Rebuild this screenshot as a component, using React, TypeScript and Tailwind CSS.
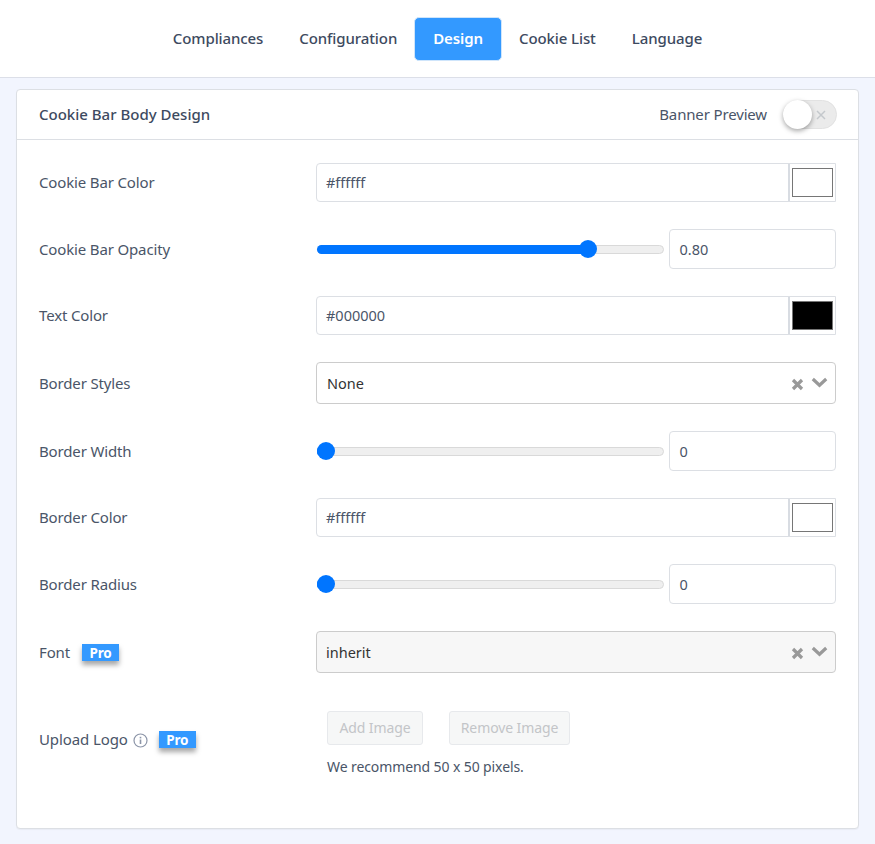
import React from "react";

const font = { fontFamily: '"Noto Sans", sans-serif' };

function Tab({ label, active }: { label: string; active?: boolean }) {
  return (
    <div className={active ? "h-[44px] -mx-[1px] px-[18px] flex items-center rounded-[5px] bg-[#3399ff] text-white text-[15px] font-semibold border border-[#cfe5fb] tracking-[-0.1px]" : "h-[44px] px-[18px] flex items-center text-[15px] font-medium text-[#3d4a60] tracking-[-0.1px]"}>
      {label}
    </div>
  );
}

function Row({ label, children }: { label: React.ReactNode; children: React.ReactNode }) {
  return (
    <div className="grid grid-cols-[277px_520px] items-center">
      <div className="flex items-center text-[15px] text-[#4a5568] tracking-[-0.15px]">{label}</div>
      <div>{children}</div>
    </div>
  );
}

function ColorRow({ value, color }: { value: string; color: string }) {
  return (
    <div className="flex h-[39px] border border-[#dcdfe4] rounded-l-[4px]">
      <div className="flex-1 flex items-center px-[9px] pt-[1px] text-[14.5px] text-[#4a5568]">{value}</div>
      <div className="w-[47px] border-l-2 border-[#d8dce2] flex items-center justify-center">
        <div className="w-[41px] h-[29px] border border-[#767676]" style={{ background: color }} />
      </div>
    </div>
  );
}

function SliderRow({ value, pct }: { value: string; pct: number }) {
  return (
    <div className="flex items-center h-[40px]">
      <div className="relative ml-[1px] w-[347px] h-[9px] rounded-full bg-[#efefef] border border-[#d9d9d9]">
        <div className="absolute -left-px -top-px h-[9px] rounded-full bg-[#0075ff]" style={{ width: `${pct}%` }} />
        <div className="absolute top-[-5.5px] w-[18px] h-[18px] rounded-full bg-[#0075ff]" style={{ left: `calc(${pct}% - 9px)` }} />
      </div>
      <div className="ml-[5px] w-[167px] h-[40px] flex items-center px-[9.5px] pt-[1px] border border-[#dcdfe4] rounded-[4px] text-[14.5px] text-[#4a5568]">{value}</div>
    </div>
  );
}

function SelectIcons() {
  return (
    <div className="flex items-center gap-[7px] pr-[7px] pl-2">
      <svg width="13" height="13" viewBox="0 0 13 13" className="mt-[2px]">
        <path d="M2 2 L11 11 M11 2 L2 11" stroke="#999999" strokeWidth="3.2" />
      </svg>
      <svg width="17" height="11" viewBox="0 0 17 11" className="-mt-[1px]">
        <path d="M1.8 2 L8.5 8.2 L15.2 2" stroke="#999999" strokeWidth="3.2" fill="none" />
      </svg>
    </div>
  );
}

function Pro() {
  return (
    <span className="inline-flex items-center justify-center w-[37px] h-[17px] bg-[#3399ff] text-white text-[13.5px] font-bold shadow-[0_4px_5px_rgba(0,0,0,0.35)] leading-none tracking-[-0.2px] pt-[2px]">
      Pro
    </span>
  );
}

export default function App() {
  return (
    <div className="w-[875px] h-[844px] overflow-hidden bg-[#f2f5fe]" style={font}>
      <div className="h-[78px] bg-white border-b border-[#dcdfe8] flex items-center justify-center">
        <div className="flex items-center">
          <Tab label="Compliances" />
          <Tab label="Configuration" />
          <Tab label="Design" active />
          <Tab label="Cookie List" />
          <Tab label="Language" />
        </div>
      </div>
      <div className="mx-[16px] mt-[11px] w-[843px] h-[740px] bg-white border border-[#dcdfe4] rounded-[4px] shadow-[0_1px_1px_rgba(0,0,0,0.04)]">
        <div className="h-[50px] border-b border-[#dcdfe4] flex items-center justify-between pl-[22px] pr-[21px]">
          <div className="text-[15px] font-medium text-[#3d4a60]">Cookie Bar Body Design</div>
          <div className="flex items-center">
            <span className="text-[15px] text-[#4a5568] tracking-[-0.15px] mr-[16px]">Banner Preview</span>
            <div className="relative w-[54px] h-[29px] rounded-full bg-[#ebebeb] border border-[#e2e2e2]">
              <div className="absolute left-[-1px] top-[-1px] w-[29px] h-[29px] rounded-full bg-white shadow-[0_2px_5px_rgba(0,0,0,0.35)]" />
              <svg width="10" height="10" viewBox="0 0 10 10" className="absolute right-[10px] top-[9px]">
                <path d="M1 1 L9 9 M9 1 L1 9" stroke="#c4c8cc" strokeWidth="1.5" />
              </svg>
            </div>
          </div>
        </div>
        <div className="pl-[22px] pt-[23px] flex flex-col gap-[27px]">
          <Row label="Cookie Bar Color"><ColorRow value="#ffffff" color="#ffffff" /></Row>
          <Row label="Cookie Bar Opacity"><SliderRow value="0.80" pct={78.3} /></Row>
          <Row label="Text Color"><ColorRow value="#000000" color="#000000" /></Row>
          <Row label="Border Styles">
            <div className="h-[42px] flex items-center justify-between border border-[#cccccc] rounded-[4px] pl-[10px]">
              <span className="text-[14.5px] text-[#333333] pt-[1px]">None</span>
              <SelectIcons />
            </div>
          </Row>
          <Row label="Border Width"><SliderRow value="0" pct={2.4} /></Row>
          <Row label="Border Color"><ColorRow value="#ffffff" color="#ffffff" /></Row>
          <Row label="Border Radius"><SliderRow value="0" pct={2.4} /></Row>
          <Row label={<><span>Font</span><span className="ml-[12px] mt-[1px] inline-flex"><Pro /></span></>}>
            <div className="h-[42px] flex items-center justify-between border border-[#cccccc] rounded-[4px] pl-[9px] bg-[#f7f7f7]">
              <span className="text-[14.5px] text-[#333333] pt-[1px]">inherit</span>
              <SelectIcons />
            </div>
          </Row>
          <div className="grid grid-cols-[277px_520px] items-start pt-[11px]">
            <div className="flex items-center text-[15px] text-[#4a5568] tracking-[-0.1px] pt-[17px]">
              <span>Upload Logo</span>
              <svg width="15" height="15" viewBox="0 0 15 15" className="ml-[5px] mt-[2px]">
                <circle cx="7.5" cy="7.5" r="6.5" fill="none" stroke="#8c95a8" strokeWidth="1.2" />
                <rect x="6.7" y="6.5" width="1.6" height="4.5" fill="#8c95a8" />
                <rect x="6.7" y="3.8" width="1.6" height="1.6" fill="#8c95a8" />
              </svg>
              <span className="ml-[11px] mt-[1px] inline-flex"><Pro /></span>
            </div>
            <div className="pl-[11px]">
              <div className="flex gap-[26px]">
                <div className="h-[34px] w-[96px] pb-[1px] flex items-center justify-center border border-[#e7e9ec] rounded-[3px] bg-[#f6f7f7] text-[14px] text-[#c3c5c8] tracking-[-0.1px]">Add Image</div>
                <div className="h-[34px] w-[121px] pb-[1px] flex items-center justify-center border border-[#e7e9ec] rounded-[3px] bg-[#f6f7f7] text-[14px] text-[#c3c5c8] tracking-[-0.1px]">Remove Image</div>
              </div>
              <div className="mt-[11px] text-[14px] text-[#4a5568] tracking-[-0.1px]">We recommend 50 x 50 pixels.</div>
            </div>
          </div>
        </div>
      </div>
    </div>
  );
}
